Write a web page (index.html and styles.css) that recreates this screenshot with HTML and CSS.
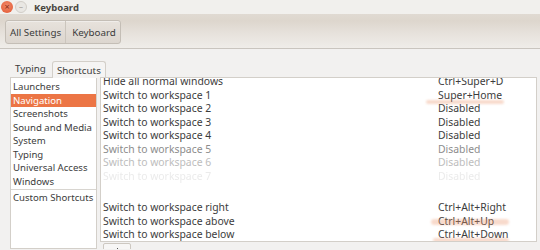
FILE: index.html
```html
<!DOCTYPE html>
<html>
<head>
  <title>Keyboard</title>
  <link rel="stylesheet" href="styles.css">
</head>
<body>
  <div class="window">
    <div class="titlebar">
      <span class="btn-close">×</span>
      <span class="btn-min">–</span>
      <span class="title">Keyboard</span>
    </div>
    <div class="toolbar">
      <div class="crumbs">
        <span class="crumb">All Settings</span>
        <span class="crumb">Keyboard</span>
      </div>
    </div>

    <div class="page">
      <div class="tabs">
        <span class="tab">Typing</span>
        <span class="tab active">Shortcuts</span>
      </div>

      <div class="panel">
        <div class="categories">
          <div class="cat">Launchers</div>
          <div class="cat selected">Navigation</div>
          <div class="cat">Screenshots</div>
          <div class="cat">Sound and Media</div>
          <div class="cat">System</div>
          <div class="cat">Typing</div>
          <div class="cat">Universal Access</div>
          <div class="cat">Windows</div>
          <div class="cat custom">Custom Shortcuts</div>
        </div>

        <div class="right">
          <div class="shortcuts">
            <div class="row cut"><span>Hide all normal windows</span><span class="key">Ctrl+Super+D</span></div>
            <div class="row"><span>Switch to workspace 1</span><span class="key">Super+Home</span></div>
            <div class="row"><span>Switch to workspace 2</span><span class="key">Disabled</span></div>
            <div class="row"><span>Switch to workspace 3</span><span class="key">Disabled</span></div>
            <div class="row"><span>Switch to workspace 4</span><span class="key">Disabled</span></div>
            <div class="row fade1"><span>Switch to workspace 5</span><span class="key">Disabled</span></div>
            <div class="row fade2"><span>Switch to workspace 6</span><span class="key">Disabled</span></div>
            <div class="row fade3"><span>Switch to workspace 7</span><span class="key">Disabled</span></div>
            <div class="gap"></div>
            <div class="row"><span>Switch to workspace right</span><span class="key">Ctrl+Alt+Right</span></div>
            <div class="row"><span>Switch to workspace above</span><span class="key">Ctrl+Alt+Up</span></div>
            <div class="row"><span>Switch to workspace below</span><span class="key">Ctrl+Alt+Down</span></div>
            <span class="mark m1"></span>
            <span class="mark m2"></span>
            <span class="mark m3"></span>
          </div>
          <div class="buttons">
            <span class="small-btn"><span class="glyph"></span></span>
          </div>
        </div>
      </div>
    </div>
  </div>
</body>
</html>
```

FILE: styles.css
```css
body {
  margin: 0;
  width: 540px;
  height: 250px;
  overflow: hidden;
  font-family: 'Noto Sans', 'Open Sans', sans-serif;
  font-size: 10px;
  color: #3c3c3c;
  background: #f2f1f0;
}

.titlebar {
  height: 14px;
  display: flex;
  align-items: center;
  background: #f1f0ed;
}

.btn-close {
  width: 12px;
  height: 12px;
  margin-left: 1px;
  border-radius: 50%;
  background: radial-gradient(circle at 50% 40%, #f08a6a, #e2552f);
  color: #8a2a12;
  font-size: 9px;
  line-height: 12px;
  text-align: center;
}

.btn-min {
  width: 10px;
  height: 10px;
  margin-left: 2px;
  border-radius: 50%;
  background: #e9e7e3;
  border: 1px solid #d2cec8;
  color: #aaa49c;
  font-size: 8px;
  line-height: 9px;
  text-align: center;
}

.title {
  margin-left: 7px;
  font-weight: bold;
  font-size: 9.5px;
  color: #4a4640;
}

.toolbar {
  height: 34px;
  border-bottom: 1px solid #c9c5bf;
  background: linear-gradient(#e0dad2 0%, #ddd6cd 20%, #e6e1db 55%, #efede9 100%);
  display: flex;
  align-items: center;
  padding-left: 5px;
}

.crumbs {
  display: flex;
  height: 22px;
  margin-top: 2px;
  border: 1px solid #c4beb6;
  border-radius: 3px;
  background: linear-gradient(#e7e2dc, #dcd6cf);
  box-shadow: inset 0 1px 0 rgba(255, 255, 255, 0.4);
}

.crumb {
  display: flex;
  align-items: center;
  padding: 0 4px;
  font-size: 9.8px;
  color: #3c3c3c;
}

.crumb + .crumb {
  border-left: 1px solid #cbc5bd;
  padding: 0 4px 0 6px;
}

.page {
  padding: 11px 3px 0 10px;
}

.tabs {
  display: flex;
  align-items: flex-end;
  height: 17px;
  padding-left: 1px;
}

.tab {
  padding: 0 4px 2px;
  font-size: 9.8px;
}

.tab.active {
  margin-left: 2px;
  padding: 2px 4px 1px;
  border: 1px solid #d3cfc9;
  border-bottom: none;
  border-radius: 3px 3px 0 0;
  background: #f5f4f3;
  position: relative;
  top: 1px;
}

.panel {
  display: flex;
  gap: 3px;
  height: 172px;
  overflow: hidden;
}

.categories {
  width: 85px;
  border: 1px solid #d3cfc9;
  background: #fff;
  padding-top: 2px;
}

.cat {
  height: 13.5px;
  line-height: 13.5px;
  padding-left: 2px;
  white-space: nowrap;
  font-size: 9.6px;
}

.cat.selected {
  background: #ec7545;
  color: #fff;
}

.cat.custom {
  margin-top: 1px;
  padding-top: 1px;
  border-top: 1px solid #d8d5d0;
}

.right {
  flex: 1;
  display: flex;
  flex-direction: column;
}

.shortcuts {
  position: relative;
  height: 163px;
  flex-shrink: 0;
  border: 1px solid #d3cfc9;
  background: #fff;
  overflow: hidden;
}

.row {
  display: flex;
  height: 13.5px;
  line-height: 13.5px;
  padding-left: 2px;
  white-space: nowrap;
  font-size: 10.4px;
}

.row span:first-child {
  width: 335px;
}

.row.cut {
  margin-top: -3px;
}

.row.fade1 {
  color: #8c8c8c;
}

.row.fade2 {
  color: #bdbdbd;
}

.row.fade3 {
  color: #ebebeb;
  filter: blur(0.6px);
}

.gap {
  height: 18px;
}

.mark {
  position: absolute;
  height: 4px;
  border-radius: 3px;
  background: rgba(236, 150, 110, 0.35);
  filter: blur(1px);
}

.m1 {
  left: 325px;
  top: 22px;
  width: 78px;
}

.m2 {
  left: 330px;
  top: 141px;
  width: 78px;
  height: 6px;
}

.m3 {
  left: 332px;
  top: 160px;
  width: 76px;
}

.buttons {
  padding: 1px 0 0 3px;
}

.small-btn {
  display: flex;
  justify-content: center;
  width: 26px;
  height: 14px;
  border: 1px solid #cdc8c1;
  border-radius: 2px;
  background: #f7f6f5;
}

.glyph {
  width: 1px;
  height: 4px;
  margin-top: 4px;
  background: #555;
}
```
